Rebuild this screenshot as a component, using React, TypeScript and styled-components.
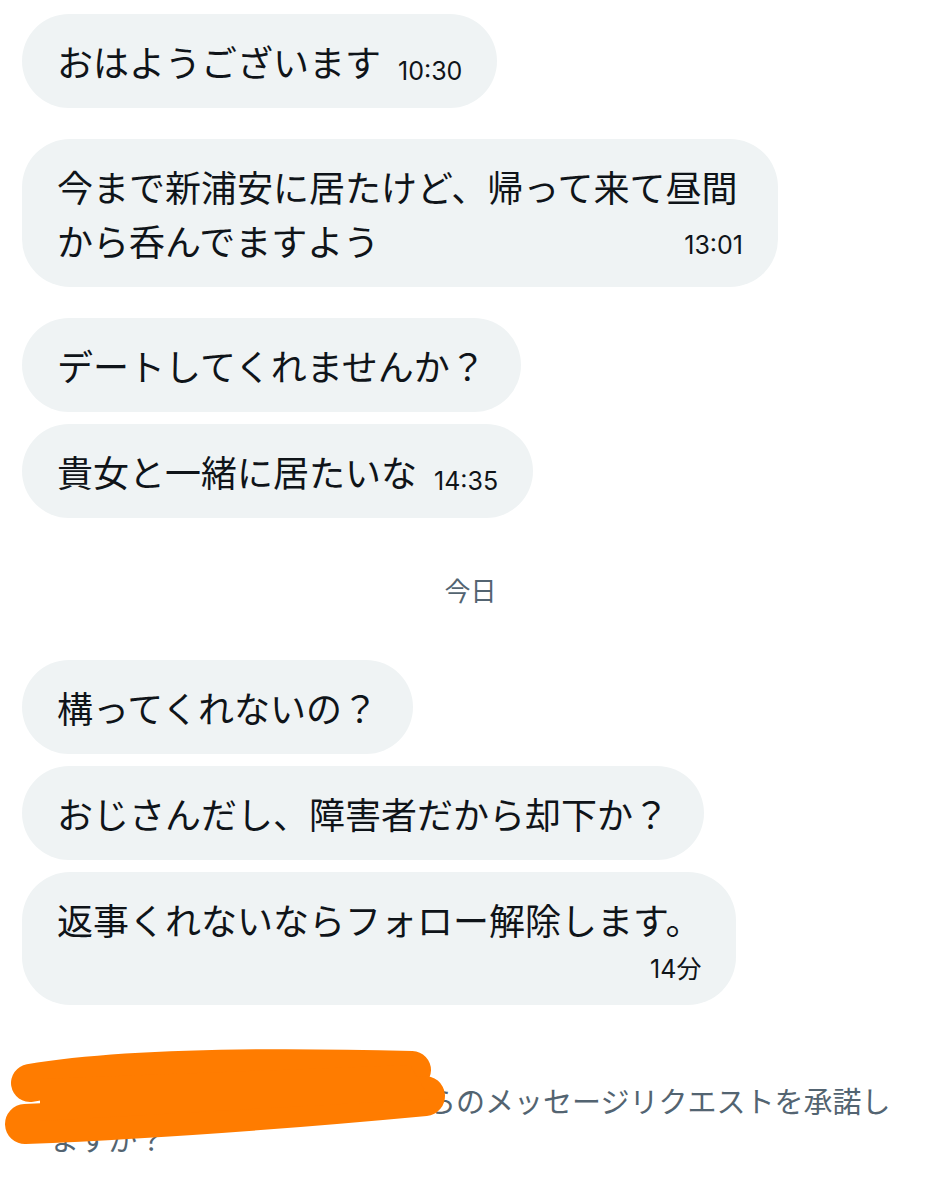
import React from 'react';
import styled, { createGlobalStyle } from 'styled-components';

const GlobalStyle = createGlobalStyle`
  html, body {
    margin: 0;
    padding: 0;
    background: #ffffff;
  }
  body {
    font-family: "Noto Sans CJK JP", "Noto Sans", sans-serif;
    color: #0f1419;
  }
`;

const Page = styled.div`
  width: 941px;
  min-height: 1200px;
  padding: 14px 0 0 0;
  box-sizing: border-box;
  overflow: hidden;
`;

const Thread = styled.div`
  display: flex;
  flex-direction: column;
  align-items: flex-start;
  gap: 31px;
  padding-left: 22px;
`;

const Group = styled.div`
  display: flex;
  flex-direction: column;
  align-items: flex-start;
  gap: 12px;
`;

const Bubble = styled.div`
  background: #eff3f4;
  border-radius: 48px;
  padding: 20px 35px;
  max-width: 756px;
  box-sizing: border-box;
  font-size: 36px;
  line-height: 54px;
  color: #0f1419;
`;

const Time = styled.span<{ $mode: 'inline' | 'end' | 'below' }>`
  font-family: Inter, "Liberation Sans", "Noto Sans CJK JP", sans-serif;
  font-size: 25px;
  color: #0f1419;
  ${(p) =>
    p.$mode === 'inline'
      ? `margin-left: 17px; line-height: 0; position: relative; top: 3px;`
      : p.$mode === 'end'
      ? `float: right; margin-left: 18px; line-height: 43px; padding-top: 11px;`
      : `display: block; text-align: right; line-height: 31px; padding-top: 8px;`}
`;

const Divider = styled.div`
  align-self: stretch;
  height: 80px;
  display: flex;
  align-items: center;
  justify-content: center;
  margin-left: -22px;
  font-size: 26px;
  color: #536471;
`;

const Request = styled.div`
  position: relative;
  margin-top: 76px;
  padding: 0 30px 0 50px;
  font-size: 29px;
  line-height: 38px;
  color: #536471;
`;

const Scribble = styled.svg`
  position: absolute;
  left: 0;
  top: -42px;
  width: 460px;
  height: 120px;
  pointer-events: none;
`;

type Message = { text: string; time?: string; mode?: 'inline' | 'end' | 'below' };

const groups: Message[][] = [
  [{ text: 'おはようございます', time: '10:30', mode: 'inline' }],
  [{ text: '今まで新浦安に居たけど、帰って来て昼間から呑んでますよう', time: '13:01', mode: 'end' }],
  [
    { text: 'デートしてくれませんか？' },
    { text: '貴女と一緒に居たいな', time: '14:35', mode: 'inline' },
  ],
];

const today: Message[] = [
  { text: '構ってくれないの？' },
  { text: 'おじさんだし、障害者だから却下か？' },
  { text: '返事くれないならフォロー解除します。', time: '14分', mode: 'below' },
];

function Msg({ m }: { m: Message }) {
  return (
    <Bubble>
      {m.text}
      {m.time && <Time $mode={m.mode ?? 'inline'}>{m.time}</Time>}
    </Bubble>
  );
}

export default function App() {
  return (
    <>
      <GlobalStyle />
      <Page>
        <Thread>
          {groups.map((g, i) => (
            <Group key={i}>
              {g.map((m, j) => (
                <Msg key={j} m={m} />
              ))}
            </Group>
          ))}
          <Divider>今日</Divider>
          <Group>
            {today.map((m, j) => (
              <Msg key={j} m={m} />
            ))}
          </Group>
        </Thread>
        <Request>
          ○○○○○○○○○○○○からのメッセージリクエストを承諾しますか？
          <Scribble viewBox="0 1040 460 120">
            <g stroke="#ff7c00" strokeLinecap="round" fill="none">
              <path d="M30 1084 Q150 1064 412 1071" strokeWidth="38" />
              <path d="M25 1125 Q200 1118 425 1097" strokeWidth="40" />
            </g>
            <path d="M40 1080 L410 1066 L430 1100 L40 1122 Z" fill="#ff7c00" />
          </Scribble>
        </Request>
      </Page>
    </>
  );
}
